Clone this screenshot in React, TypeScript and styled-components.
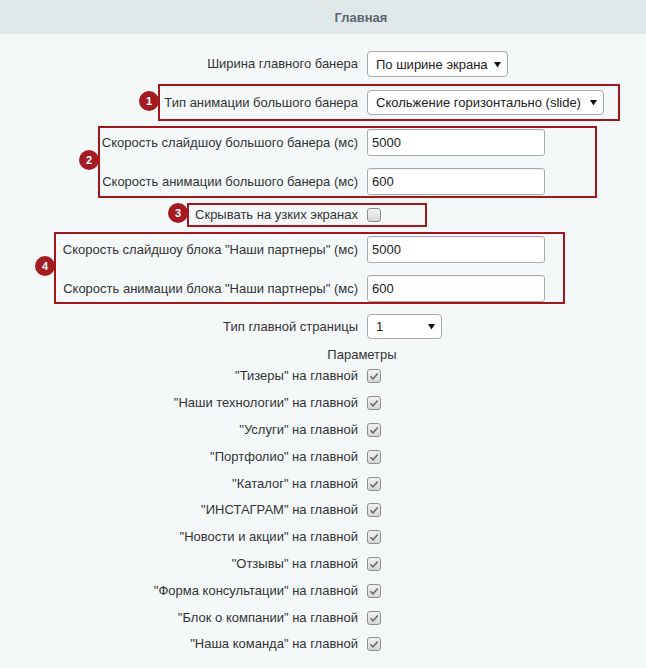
import { createGlobalStyle, styled } from "styled-components";

const LABEL_W = 358;
const PAGE_W = 646;
// the form's centre line sits right of the visible page centre
const CENTER_SHIFT = 76;

const GlobalStyle = createGlobalStyle`
  html,
  body {
    margin: 0;
    padding: 0;
    background: #f5f8f9;
  }
`;

const homeBlocks = [
  "\"Тизеры\" на главной",
  "\"Наши технологии\" на главной",
  "\"Услуги\" на главной",
  "\"Портфолио\" на главной",
  "\"Каталог\" на главной",
  "\"ИНСТАГРАМ\" на главной",
  "\"Новости и акции\" на главной",
  "\"Отзывы\" на главной",
  "\"Форма консультации\" на главной",
  "\"Блок о компании\" на главной",
  "\"Наша команда\" на главной",
];

const Arrow = () => (
  <svg width="7" height="7" viewBox="0 0 7 7">
    <path d="M0 1 L7 1 L3.5 6.5 Z" fill="#111" />
  </svg>
);

const Check = () => (
  <svg width="12" height="12" viewBox="0 0 12 12">
    <path
      d="M2.4 6.2 L5 8.8 L9.8 3.4"
      fill="none"
      stroke="#6a6a6a"
      strokeWidth="1.5"
    />
  </svg>
);

const App = () => {
  return (
    <StPage>
      <GlobalStyle />
      <StHeader>Главная</StHeader>
      <StForm>
        <StRow>
          <StLabel>Ширина главного банера</StLabel>
          <StSelect $width={141} $height={26}>
            По ширине экрана
            <Arrow />
          </StSelect>
        </StRow>

        <StFrame $left={158} $width={462} $mt={7} $pad="4px 0">
          <StBadge>1</StBadge>
          <StRow>
            <StLabel>Тип анимации большого банера</StLabel>
            <StSelect $width={237} $height={25}>
              Скольжение горизонтально (slide)
              <Arrow />
            </StSelect>
          </StRow>
        </StFrame>

        <StFrame $left={98} $width={499} $mt={5} $pad="1px 0">
          <StBadge>2</StBadge>
          <StRow>
            <StLabel>Скорость слайдшоу большого банера (мс)</StLabel>
            <StInput>5000</StInput>
          </StRow>
          <StRow $mt={12}>
            <StLabel>Скорость анимации большого банера (мс)</StLabel>
            <StInput>600</StInput>
          </StRow>
        </StFrame>

        <StFrame $left={187} $width={240} $mt={5} $pad="2px 0">
          <StBadge>3</StBadge>
          <StRow>
            <StLabel>Скрывать на узких экранах</StLabel>
            <StCheckbox />
          </StRow>
        </StFrame>

        <StFrame $left={54} $width={511} $mt={5} $pad="2px 0 0">
          <StBadge>4</StBadge>
          <StRow>
            <StLabel>Скорость слайдшоу блока "Наши партнеры" (мс)</StLabel>
            <StInput>5000</StInput>
          </StRow>
          <StRow $mt={12}>
            <StLabel>Скорость анимации блока "Наши партнеры" (мс)</StLabel>
            <StInput>600</StInput>
          </StRow>
        </StFrame>

        <StRow $mt={10}>
          <StLabel>Тип главной страницы</StLabel>
          <StSelect $width={75} $height={25}>
            1
            <Arrow />
          </StSelect>
        </StRow>

        <StSectionTitle>Параметры</StSectionTitle>

        <StFlagList>
          {homeBlocks.map((block) => (
            <StFlagRow key={block}>
              <StLabel>{block}</StLabel>
              <StCheckbox>
                <Check />
              </StCheckbox>
            </StFlagRow>
          ))}
        </StFlagList>
      </StForm>
    </StPage>
  );
};

export default App;

const StPage = styled.div`
  width: ${PAGE_W}px;
  min-height: 668px;

  background: #f5f8f9;
  color: #333;
  font-family: "Liberation Sans", Arial, sans-serif;
  font-size: 13px;
`;

const StHeader = styled.div`
  display: flex;
  align-items: center;
  justify-content: center;

  height: 34px;
  padding-left: ${CENTER_SHIFT}px;

  background: #e0e7e9;
  color: #5b6870;
  font-weight: 700;
`;

const StForm = styled.div`
  display: flex;
  flex-direction: column;

  padding-top: 17px;
`;

const StRow = styled.div<{ $mt?: number }>`
  display: grid;
  grid-template-columns: var(--label-w, ${LABEL_W}px) auto;
  column-gap: 9px;
  align-items: center;

  margin-top: ${({ $mt }) => $mt ?? 0}px;
`;

const StLabel = styled.span`
  text-align: right;
  white-space: nowrap;
  line-height: 16px;
`;

const StFrame = styled.div<{
  $left: number;
  $width: number;
  $mt: number;
  $pad: string;
}>`
  --label-w: ${({ $left }) => LABEL_W - $left - 2}px;

  position: relative;

  width: ${({ $width }) => $width}px;
  margin: ${({ $mt }) => $mt}px 0 0 ${({ $left }) => $left}px;
  padding: ${({ $pad }) => $pad};

  border: 2px solid #a3161c;
  box-sizing: border-box;
`;

const StBadge = styled.span`
  position: absolute;
  left: -21px;
  top: calc(50% - 12px);

  display: flex;
  align-items: center;
  justify-content: center;

  width: 20px;
  height: 20px;

  border-radius: 50%;
  background: #a51b22;
  color: #fff;
  font-size: 11px;
  font-weight: 700;
`;

const StSelect = styled.div<{ $width: number; $height: number }>`
  display: flex;
  align-items: center;
  justify-content: space-between;

  width: ${({ $width }) => $width}px;
  height: ${({ $height }) => $height}px;
  padding: 0 6px 0 8px;

  border: 1px solid #a9a9a9;
  border-radius: 4px;
  background: #fff;
  color: #222;
  box-sizing: border-box;
  white-space: nowrap;
`;

const StInput = styled.div`
  display: flex;
  align-items: center;

  width: 178px;
  height: 27px;
  padding-left: 4px;

  border: 1px solid #aaa;
  border-radius: 3px;
  background: #fff;
  box-shadow: inset 0 1px 1px rgba(0, 0, 0, 0.06);
  color: #222;
  box-sizing: border-box;
`;

const StCheckbox = styled.span`
  display: flex;
  align-items: center;
  justify-content: center;

  width: 14px;
  height: 14px;

  border: 1px solid #8e8e8e;
  border-radius: 3px;
  background: linear-gradient(#f2f2f2, #d6d6d6);
  box-sizing: border-box;
`;

const StSectionTitle = styled.div`
  margin-top: 8px;
  padding-left: ${CENTER_SHIFT + 2}px;

  line-height: 16px;
  text-align: center;
`;

const StFlagList = styled.div`
  display: flex;
  flex-direction: column;
`;

const StFlagRow = styled(StRow)`
  height: 26.8px;
`;
